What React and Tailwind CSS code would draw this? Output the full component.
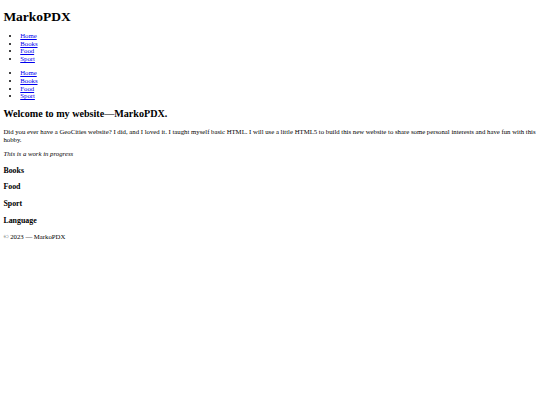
import React from 'react';

// Plain unstyled document look, scaled down to fit 540px (original 1280px)
const links = ['Home', 'Books', 'Food', 'Sport'];

const NavList = () => (
    <nav>
        <ul className="list-disc my-[6.75px] pl-[16.875px]">
            {links.map(label => (
                <li key={label}>
                    <a href="#" className="text-[#0000ee] underline">{label}</a>
                </li>
            ))}
        </ul>
    </nav>
);

const App = () => {
    return (
        <div className="m-[3.375px] font-['Liberation_Serif','Times_New_Roman',serif] text-[6.75px] leading-[7.6px] text-black bg-white">
            <header>
                <h1 className="text-[13.5px] leading-[15px] font-bold my-[8.6px]">MarkoPDX</h1>
                <NavList />
            </header>
            <NavList />
            <main>
                <h2 className="text-[10.125px] leading-[11.64px] font-bold my-[8.4px]">Welcome to my website—MarkoPDX.</h2>
                <p className="my-[6.75px]">
                    Did you ever have a GeoCities website? I did, and I loved it. I taught myself basic HTML. I will use a little HTML5 to build this new website to share some personal interests and have fun with this hobby.
                </p>
                <p className="my-[6.75px]"><em>This is a work in progress</em></p>
                <section>
                    <h3 className="text-[7.9px] leading-[9px] font-bold my-[7.9px]">Books</h3>
                </section>
                <section>
                    <h3 className="text-[7.9px] leading-[9px] font-bold my-[7.9px]">Food</h3>
                </section>
                <section>
                    <h3 className="text-[7.9px] leading-[9px] font-bold my-[7.9px]">Sport</h3>
                </section>
                <section>
                    <h3 className="text-[7.9px] leading-[9px] font-bold my-[7.9px]">Language</h3>
                </section>
            </main>
            <footer>
                <p>© 2023 — MarkoPDX</p>
            </footer>
        </div>
    );
};

export default App;
